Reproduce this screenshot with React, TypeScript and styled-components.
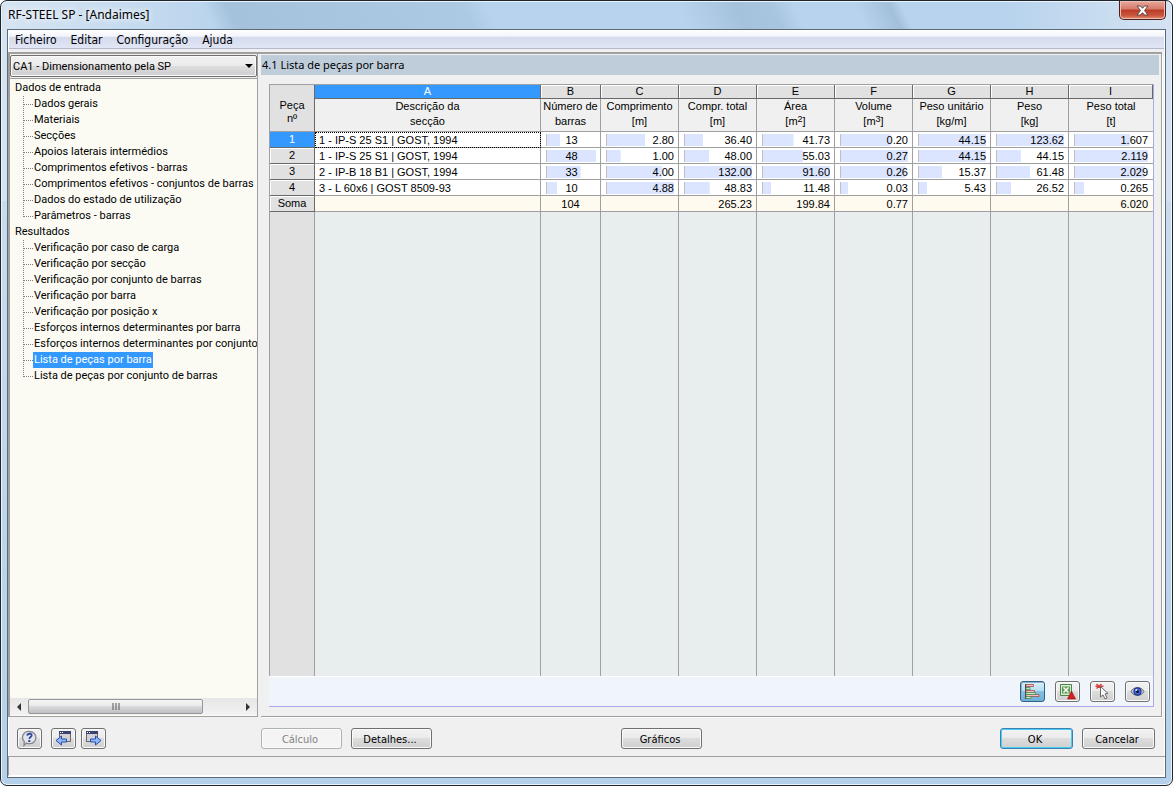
import React from 'react';
import styled, { createGlobalStyle, css } from 'styled-components';

const UI_FONT = '"DejaVu Sans Condensed", "Noto Sans", sans-serif';
const LIST_FONT = 'Roboto, "Noto Sans", sans-serif';
const GRID_FONT = '"Liberation Sans", Arial, sans-serif';

const GlobalStyle = createGlobalStyle`
  * { box-sizing: border-box; }
  body { margin: 0; background: #fff; color: #000; font: 11px/16px ${UI_FONT}; }
  button, select { font: inherit; color: inherit; }
`;

/* ---------- window frame ---------- */

const Window = styled.div`
  display: flex;
  flex-direction: column;
  height: 100vh;
  min-height: 560px;
  padding: 0 6px 7px;
  border: 1px solid #20252b;
  border-radius: 7px;
  background:
    linear-gradient(65deg, transparent 18%, #a5c2dc 20%, #adcae4 40%, transparent 42%, transparent 58%, #a5c2dc 63%, #a9c6e0 66%, transparent 68%, transparent 73%, #a3c0da 76%, transparent 77%) top / 100% 28px no-repeat,
    linear-gradient(90deg, #d6e4f2, #b8d3ed 20%, #b8d3ed 86%, #d4e3f3) top / 100% 200px no-repeat,
    linear-gradient(#d0e0f0, #b4d0ea);
  box-shadow: inset 0 0 0 1px #e9f4fd;
`;

const TitleBar = styled.header`
  display: flex;
  flex: none;
  align-items: flex-start;
  justify-content: space-between;
  height: 28px;
`;

const Title = styled.h1`
  margin: 0;
  padding: 6px 0 0 1px;
  font: 12px/16px "Noto Sans", sans-serif;
  text-shadow: 0 0 6px #fff, 0 0 8px #fff;
`;

const CloseButton = styled.button`
  display: grid;
  place-items: center;
  width: 47px;
  height: 19px;
  padding: 0;
  border: 1px solid #4b1f1c;
  border-top: 0;
  border-radius: 0 0 5px 5px;
  background: linear-gradient(#e9a99c, #d5796a 45%, #bb3a24 50%, #c9563f 80%, #e08f6c);
  box-shadow: inset 0 0 0 1px #eebfb4;
`;

const Client = styled.div`
  display: flex;
  flex: 1;
  flex-direction: column;
  min-height: 0;
  border: 1px solid #5d6b78;
  background: #f0f0f0;
  box-shadow: inset 0 0 0 1px #fff;
`;

const MenuBar = styled.nav`
  display: flex;
  flex: none;
  gap: 14px;
  height: 19px;
  margin: 0 1px;
  padding: 2px 6px 0;
  border-bottom: 1px solid #b4b9cc;
  background: linear-gradient(#fff, #f2f4fa 35%, #d5dbee 40%, #e1e6f5);
`;

const MenuItem = styled.a`
  color: #000;
  font-size: 12px;
  line-height: 16px;
  text-decoration: none;
`;

/* ---------- panes ---------- */

const Workspace = styled.main`
  display: grid;
  flex: 1;
  grid-template-columns: 250px minmax(0, 1fr);
  gap: 3px;
  min-height: 0;
  margin: 3px 3px 0 0;
  border-top: 2px solid #a0a0a0;
`;

const SidePane = styled.aside`
  display: flex;
  flex-direction: column;
  min-height: 0;
  border: solid #a0a0a0;
  border-width: 0 1px 1px 2px;
  background: #fbfbf3;
`;

const ComboFrame = styled.label`
  display: grid;
  flex: none;
  height: 25px;
  padding: 1px 0;
  border-bottom: 1px solid #a0a0a0;
  background: #f0f0f0;

  > * { grid-area: 1 / 1; }

  > svg {
    place-self: center end;
    margin-right: 4px;
    pointer-events: none;
  }
`;

const Combo = styled.select`
  width: 100%;
  height: 22px;
  padding: 1px 20px 0 2px;
  border: 1px solid #707070;
  border-radius: 2px;
  background: linear-gradient(#f2f2f2, #ebebeb 48%, #dcdcdc 52%, #cfcfcf);
  box-shadow: inset 0 0 0 1px #fafafa;
  font-family: ${LIST_FONT};
  appearance: none;
`;

const Tree = styled.div`
  flex: 1;
  min-height: 0;
  padding-top: 1px;
  overflow: hidden;
  font-family: ${LIST_FONT};
  white-space: nowrap;
`;

const TreeGroup = styled.div`
  padding-left: 5px;
`;

const TreeItems = styled.ul`
  margin: 0;
  padding: 0 0 0 8px;
  list-style: none;
`;

const TreeItem = styled.li`
  display: flex;
  height: 16px;

  &::before {
    flex: none;
    width: 9px;
    height: 8px;
    border: dotted #808080;
    border-width: 0 0 1px 1px;
    content: '';
  }

  &:not(:last-child) {
    background: linear-gradient(#808080 50%, transparent 50%) 0 0 / 1px 2px repeat-y;
  }
`;

const TreeLink = styled.a<{ $selected?: boolean }>`
  padding: 0 1px;
  color: ${p => (p.$selected ? '#fff' : '#000')};
  background: ${p => (p.$selected ? '#3399ff' : 'transparent')};
  text-decoration: none;
`;

const ScrollBar = styled.div`
  display: flex;
  flex: none;
  align-items: center;
  height: 17px;
  margin-bottom: 1px;
  background: linear-gradient(#e6e6e6, #f2f2f2);
`;

const ScrollArrow = styled.button`
  display: grid;
  place-items: center;
  width: 18px;
  height: 15px;
  padding: 0;
  border: 0;
  background: none;
`;

const ScrollTrack = styled.div`
  flex: 1;
`;

const ScrollThumb = styled.div`
  display: grid;
  place-items: center;
  width: 83%;
  height: 15px;
  border: 1px solid #979797;
  border-radius: 2px;
  background: linear-gradient(#f5f5f5, #e9e9eb 45%, #d9dadc 50%, #c0c0c4);
`;

const ContentPane = styled.section`
  display: flex;
  flex-direction: column;
  min-width: 0;
  border: solid #a0a0a0;
  border-width: 0 1px 1px 0;
  box-shadow: 1px 1px 0 #fff;
`;

const PaneTitle = styled.h2`
  flex: none;
  margin: 1px 2px 0 0;
  padding: 2px 1px;
  background: #bfcddb;
  font: 11px/16px "Noto Sans", sans-serif;
`;

const GridFrame = styled.div`
  display: flex;
  flex: 1;
  flex-direction: column;
  min-height: 0;
  margin: 9px 7px 9px 8px;
  border: solid #aaaae8;
  border-width: 0 1px 1px 0;
`;

const GridArea = styled.div`
  flex: 1;
  min-height: 0;
  border-bottom: 1px solid #fff;
`;

/* ---------- parts list ---------- */

const PartsTable = styled.table`
  width: 100%;
  height: 100%;
  border-spacing: 0;
  border-top: 1px solid #a0a0a0;
  border-left: 1px solid #a0a0a0;
  table-layout: fixed;
  font: 11px/13px ${GRID_FONT};
  text-align: center;
`;

const cell = css`
  padding: 0;
  border: solid #a0a0a0;
  border-width: 0 1px 1px 0;
  font-weight: normal;
  white-space: nowrap;
`;

const Letter = styled.th<{ $active?: boolean }>`
  ${cell}
  height: 14px;
  border-color: #696969;
  color: ${p => (p.$active ? '#fff' : '#000')};
  background: ${p => (p.$active ? '#3399ff' : '#e1e1e1')};
  box-shadow: inset 1px 1px 0 ${p => (p.$active ? '#3399ff' : '#fff')};
`;

const Corner = styled.th`
  ${cell}
  padding-top: 8px;
  border-right-color: #696969;
  background: #e1e1e1;
`;

const Heading = styled.th`
  ${cell}
  height: 33px;
  background: #f0f0f0;
  line-height: 15px;
  vertical-align: top;

  &:last-child { border-right: 0; }

  sup { font-size: 9px; line-height: 0; vertical-align: 3px; }
`;

const RowHead = styled.th<{ $active?: boolean }>`
  ${cell}
  height: 16px;
  border-color: #696969;
  color: ${p => (p.$active ? '#fff' : '#000')};
  background: ${p => (p.$active ? '#3399ff' : '#e1e1e1')};
  box-shadow: inset 1px 1px 0 ${p => (p.$active ? '#3399ff' : '#fff')};
`;

const Cell = styled.td<{ $sum?: boolean; $align?: string }>`
  ${cell}
  height: 16px;
  padding: 1px 4px 0;
  background: ${p => (p.$sum ? '#fffaf0' : '#fff')};
  text-align: ${p => p.$align ?? 'right'};

  &:last-child {
    padding-right: 5px;
    border-right: 0;
  }
`;

const FocusCell = styled(Cell)`
  outline: 1px dotted #000;
  outline-offset: -1px;
`;

const Bar = styled.div`
  height: 12px;
  margin-left: 1px;
  border-left: 1px solid #c0c0c0;
  background: linear-gradient(#dbe5ff, #dbe5ff) no-repeat;
  line-height: 12px;
`;

const Filler = styled.td<{ $head?: boolean }>`
  ${cell}
  border-bottom: 0;
  background: ${p => (p.$head ? '#e1e1e1' : '#e8eeee')};

  &:last-child { border-right: 0; }
`;

/* ---------- buttons ---------- */

const GridTools = styled.div`
  display: flex;
  flex: none;
  align-items: center;
  justify-content: flex-end;
  gap: 10px;
  height: 29px;
  padding-right: 3px;
  background: #f0f4fb;
`;

const buttonFace = css`
  padding: 0;
  border: 1px solid #707070;
  border-radius: 3px;
  background: linear-gradient(#f2f2f2, #ebebeb 48%, #dddddd 50%, #cfcfcf);
  box-shadow: inset 0 0 0 1px #fafafa;
`;

const IconButton = styled.button<{ $pressed?: boolean }>`
  ${buttonFace}
  display: grid;
  place-items: center;
  width: 25px;
  height: 21px;
  ${p =>
    p.$pressed &&
    css`
      border-color: #2c628b;
      background: linear-gradient(#dcf0fb, #b4dcf2 48%, #85c0e2 50%, #6cb0d8);
      box-shadow: inset 1px 1px 0 #8fb2c6;
    `}
`;

const PushButton = styled.button<{ $width?: number; $primary?: boolean }>`
  ${buttonFace}
  width: ${p => p.$width ?? 81}px;
  height: 21px;
  padding: 2px 3px 0 0;
  line-height: 17px;
  ${p =>
    p.$primary &&
    css`
      border-color: #3c7fb1;
      box-shadow: inset 0 0 0 1px #48cdf4;
    `}

  &:disabled {
    border-color: #adb2b5;
    color: #838383;
    background: #f4f4f4;
  }
`;

const Footer = styled.footer`
  display: grid;
  flex: none;
  grid-template-columns: 244px 360px auto 1fr;
  align-items: center;
  height: 40px;
  padding: 4px 10px 0 9px;
  border-bottom: 1px solid #a0a0a0;
`;

const ButtonGroup = styled.div<{ $gap?: number; $end?: boolean }>`
  display: flex;
  gap: ${p => p.$gap ?? 9}px;
  justify-content: ${p => (p.$end ? 'flex-end' : 'flex-start')};
`;

const StatusBar = styled.div`
  flex: none;
  height: 19px;
  margin-bottom: 1px;
  border-bottom: 1px solid #fff;
  border-left: 1px solid #a0a0a0;
`;

/* ---------- icons ---------- */

const HelpIcon = () => (
  <svg width="17" height="17" viewBox="0 0 17 17" aria-hidden="true">
    <path d="M8.500 1.500a6.300 6 0 0 1 0 12.200c-1.300 0-2.200-.2-3-.6L3 15.500l.3-3.900A6.300 6 0 0 1 8.500 1.500z" fill="#e2e5ea" stroke="#85888e" strokeWidth="1.300" />
    <path d="M6.200 5.600c.3-2.500 4.900-2.400 4.500-.1-.2 1.600-2.200 1.600-2.400 3.400" fill="none" stroke="#34489c" strokeWidth="1.800" />
    <rect x="7.300" y="10" width="2" height="2" fill="#34489c" />
  </svg>
);

const WindowArrowIcon = ({ forward }: { forward?: boolean }) => (
  <svg width="17" height="17" viewBox="0 0 17 17" aria-hidden="true">
    <rect x={forward ? 1.5 : 4.5} y="1.5" width="11" height="10" fill="#d2d2d6" stroke="#66666c" />
    <rect x={forward ? 1 : 4} y="1" width="12" height="3" fill="#3a4270" />
    <path d={forward ? 'M2 2.500h3' : 'M5 2.500h3'} stroke="#fff" strokeDasharray="1 1" />
    <path
      d={forward ? 'M5.500 9h5V6l5.500 4.500-5.500 4.500v-3h-5z' : 'M11.500 9h-5V6L1 10.500 6.500 15v-3h5z'}
      fill="#8db8fb"
      stroke="#2a4ca6"
    />
  </svg>
);

const BarsIcon = () => (
  <svg width="19" height="17" viewBox="0 0 19 17" aria-hidden="true">
    <path d="M2.500 1v15" stroke="#444" />
    <g strokeWidth=".8">
      <path d="M3 1.500h7.500v2H3zM3 7.500h8.500v2H3zM3 11.500h13v2H3z" fill="#ffc0c0" stroke="#985050" />
      <path d="M3 4.500h4v2H3zM3 9.500h9.500v2H3zM3 13.500h5v2H3z" fill="#c2f2bf" stroke="#4f8450" />
    </g>
  </svg>
);

const ExcelIcon = () => (
  <svg width="19" height="17" viewBox="0 0 19 17" aria-hidden="true">
    <path d="M2.500 1.500h11v11h-11z" fill="#d8edd3" stroke="#4d844a" />
    <path d="M4 3.500h8v7H4z" fill="#5d9a56" />
    <path d="M5.500 4.500l5 5M10.500 4.500l-5 5" stroke="#fff" strokeWidth="1.500" />
    <path d="M13.500 8l4 8H9.500z" fill="#d81e1e" stroke="#8c1010" strokeWidth=".6" />
  </svg>
);

const PickIcon = () => (
  <svg width="19" height="17" viewBox="0 0 19 17" aria-hidden="true">
    <path d="M3.500 1l5 4.500M8.500 1l-5 4.500M2.500 3.200h8" stroke="#d64545" strokeWidth="1.500" />
    <path d="M7.500 3.500l7.500 7-3 .4 2 4-2 1-2-4-2.500 2.100z" fill="#fff" stroke="#666" />
  </svg>
);

const EyeIcon = () => (
  <svg width="19" height="17" viewBox="0 0 19 17" aria-hidden="true">
    <path d="M3 8.500c3-5.300 10-5.300 13 0-3 5.300-10 5.300-13 0z" fill="#c5cbe0" stroke="#5a5f76" />
    <circle cx="9.500" cy="8.500" r="3.700" fill="#4166d8" stroke="#20307c" />
    <circle cx="9.500" cy="8.500" r="1.500" fill="#0a0f30" />
    <circle cx="8.300" cy="7" r="1" fill="#dfe8ff" />
  </svg>
);

/* ---------- data ---------- */

const menu = ['Ficheiro', 'Editar', 'Configuração', 'Ajuda'];

const tree = [
  {
    name: 'Dados de entrada',
    items: [
      'Dados gerais',
      'Materiais',
      'Secções',
      'Apoios laterais intermédios',
      'Comprimentos efetivos - barras',
      'Comprimentos efetivos - conjuntos de barras',
      'Dados do estado de utilização',
      'Parâmetros - barras',
    ],
  },
  {
    name: 'Resultados',
    items: [
      'Verificação por caso de carga',
      'Verificação por secção',
      'Verificação por conjunto de barras',
      'Verificação por barra',
      'Verificação por posição x',
      'Esforços internos determinantes por barra',
      'Esforços internos determinantes por conjunto',
      'Lista de peças por barra',
      'Lista de peças por conjunto de barras',
    ],
  },
];
const current = 'Lista de peças por barra';

const columns: { head: React.ReactNode; unit: React.ReactNode; width?: number }[] = [
  { head: 'Descrição da', unit: 'secção', width: 226 },
  { head: 'Número de', unit: 'barras', width: 60 },
  { head: 'Comprimento', unit: '[m]', width: 78 },
  { head: 'Compr. total', unit: '[m]', width: 78 },
  { head: 'Área', unit: <>[m<sup>2</sup>]</>, width: 78 },
  { head: 'Volume', unit: <>[m<sup>3</sup>]</>, width: 78 },
  { head: 'Peso unitário', unit: '[kg/m]', width: 78 },
  { head: 'Peso', unit: '[kg]', width: 78 },
  { head: 'Peso total', unit: '[t]' },
];

const parts = [
  { section: '1 - IP-S 25 S1 | GOST, 1994', values: ['13', '2.80', '36.40', '41.73', '0.20', '44.15', '123.62', '1.607'] },
  { section: '1 - IP-S 25 S1 | GOST, 1994', values: ['48', '1.00', '48.00', '55.03', '0.27', '44.15', '44.15', '2.119'] },
  { section: '2 - IP-B 18 B1 | GOST, 1994', values: ['33', '4.00', '132.00', '91.60', '0.26', '15.37', '61.48', '2.029'] },
  { section: '3 - L 60x6 | GOST 8509-93', values: ['10', '4.88', '48.83', '11.48', '0.03', '5.43', '26.52', '0.265'] },
];
const totals = ['', '104', '', '265.23', '199.84', '0.77', '', '', '6.020'];
const peaks = parts[0].values.map((_, i) => Math.max(...parts.map(p => Number(p.values[i]))));

function PartsList() {
  return (
    <PartsTable>
      <colgroup>
        <col style={{ width: 45 }} />
        {columns.map((c, i) => (
          <col key={i} style={{ width: c.width }} />
        ))}
      </colgroup>
      <thead>
        <tr>
          <Corner rowSpan={2}>Peça<br />nº</Corner>
          {columns.map((_, i) => (
            <Letter key={i} $active={i === 0}>{'ABCDEFGHI'[i]}</Letter>
          ))}
        </tr>
        <tr>
          {columns.map((c, i) => (
            <Heading key={i}>{c.head}<br />{c.unit}</Heading>
          ))}
        </tr>
      </thead>
      <tbody>
        {parts.map((p, r) => {
          const Section = r === 0 ? FocusCell : Cell;
          return (
            <tr key={r}>
              <RowHead $active={r === 0}>{r + 1}</RowHead>
              <Section $align="left">{p.section}</Section>
              {p.values.map((v, i) => (
                <Cell key={i} $align={i === 0 ? 'center' : 'right'}>
                  <Bar style={{ backgroundSize: `${(Number(v) / peaks[i]) * 100}% 100%` }}>{v}</Bar>
                </Cell>
              ))}
            </tr>
          );
        })}
        <tr>
          <RowHead>Soma</RowHead>
          {totals.map((t, i) => (
            <Cell key={i} $sum $align={i === 1 ? 'center' : 'right'}>{t}</Cell>
          ))}
        </tr>
        <tr>
          <Filler $head />
          {columns.map((_, i) => (
            <Filler key={i} />
          ))}
        </tr>
      </tbody>
    </PartsTable>
  );
}

export default function App() {
  return (
    <>
      <GlobalStyle />
      <Window>
        <TitleBar>
          <Title>RF-STEEL SP - [Andaimes]</Title>
          <CloseButton aria-label="Fechar">
            <svg width="13" height="11" viewBox="0 0 13 11" aria-hidden="true">
              <path d="M1 1h3.500l2 2.300L8.500 1H12L8.500 5.500 12 10H8.500l-2-2.300-2 2.300H1l3.500-4.500z" fill="#fff" stroke="#5c4848" />
            </svg>
          </CloseButton>
        </TitleBar>
        <Client>
          <MenuBar>
            {menu.map(m => (
              <MenuItem key={m} href="#">{m}</MenuItem>
            ))}
          </MenuBar>
          <Workspace>
            <SidePane>
              <ComboFrame>
                <Combo aria-label="Caso de dimensionamento">
                  <option>CA1 - Dimensionamento pela SP</option>
                </Combo>
                <svg width="8" height="4" viewBox="0 0 8 4" aria-hidden="true">
                  <path d="M0 0h8L4 4z" />
                </svg>
              </ComboFrame>
              <Tree>
                {tree.map(g => (
                  <TreeGroup key={g.name}>
                    {g.name}
                    <TreeItems>
                      {g.items.map(t => (
                        <TreeItem key={t}>
                          <TreeLink href="#" $selected={t === current}>{t}</TreeLink>
                        </TreeItem>
                      ))}
                    </TreeItems>
                  </TreeGroup>
                ))}
              </Tree>
              <ScrollBar>
                <ScrollArrow aria-label="Deslocar para a esquerda">
                  <svg width="4" height="8" viewBox="0 0 4 8"><path d="M4 0v8L0 4z" fill="#333" /></svg>
                </ScrollArrow>
                <ScrollTrack>
                  <ScrollThumb>
                    <svg width="8" height="7" viewBox="0 0 8 7"><path d="M1 0v7M4 0v7M7 0v7" stroke="#555" /></svg>
                  </ScrollThumb>
                </ScrollTrack>
                <ScrollArrow aria-label="Deslocar para a direita">
                  <svg width="4" height="8" viewBox="0 0 4 8"><path d="M0 0v8l4-4z" fill="#333" /></svg>
                </ScrollArrow>
              </ScrollBar>
            </SidePane>
            <ContentPane>
              <PaneTitle>4.1 Lista de peças por barra</PaneTitle>
              <GridFrame>
                <GridArea>
                  <PartsList />
                </GridArea>
                <GridTools>
                  <IconButton $pressed aria-label="Barras de resultados"><BarsIcon /></IconButton>
                  <IconButton aria-label="Exportar para Excel"><ExcelIcon /></IconButton>
                  <IconButton aria-label="Selecionar barra"><PickIcon /></IconButton>
                  <IconButton aria-label="Modo de visualização"><EyeIcon /></IconButton>
                </GridTools>
              </GridFrame>
            </ContentPane>
          </Workspace>
          <Footer>
            <ButtonGroup>
              <IconButton aria-label="Ajuda"><HelpIcon /></IconButton>
              <ButtonGroup $gap={5}>
                <IconButton aria-label="Anterior"><WindowArrowIcon /></IconButton>
                <IconButton aria-label="Seguinte"><WindowArrowIcon forward /></IconButton>
              </ButtonGroup>
            </ButtonGroup>
            <ButtonGroup>
              <PushButton disabled>Cálculo</PushButton>
              <PushButton>Detalhes...</PushButton>
            </ButtonGroup>
            <PushButton>Gráficos</PushButton>
            <ButtonGroup $end>
              <PushButton $width={73} $primary>OK</PushButton>
              <PushButton $width={73}>Cancelar</PushButton>
            </ButtonGroup>
          </Footer>
          <StatusBar />
        </Client>
      </Window>
    </>
  );
}
